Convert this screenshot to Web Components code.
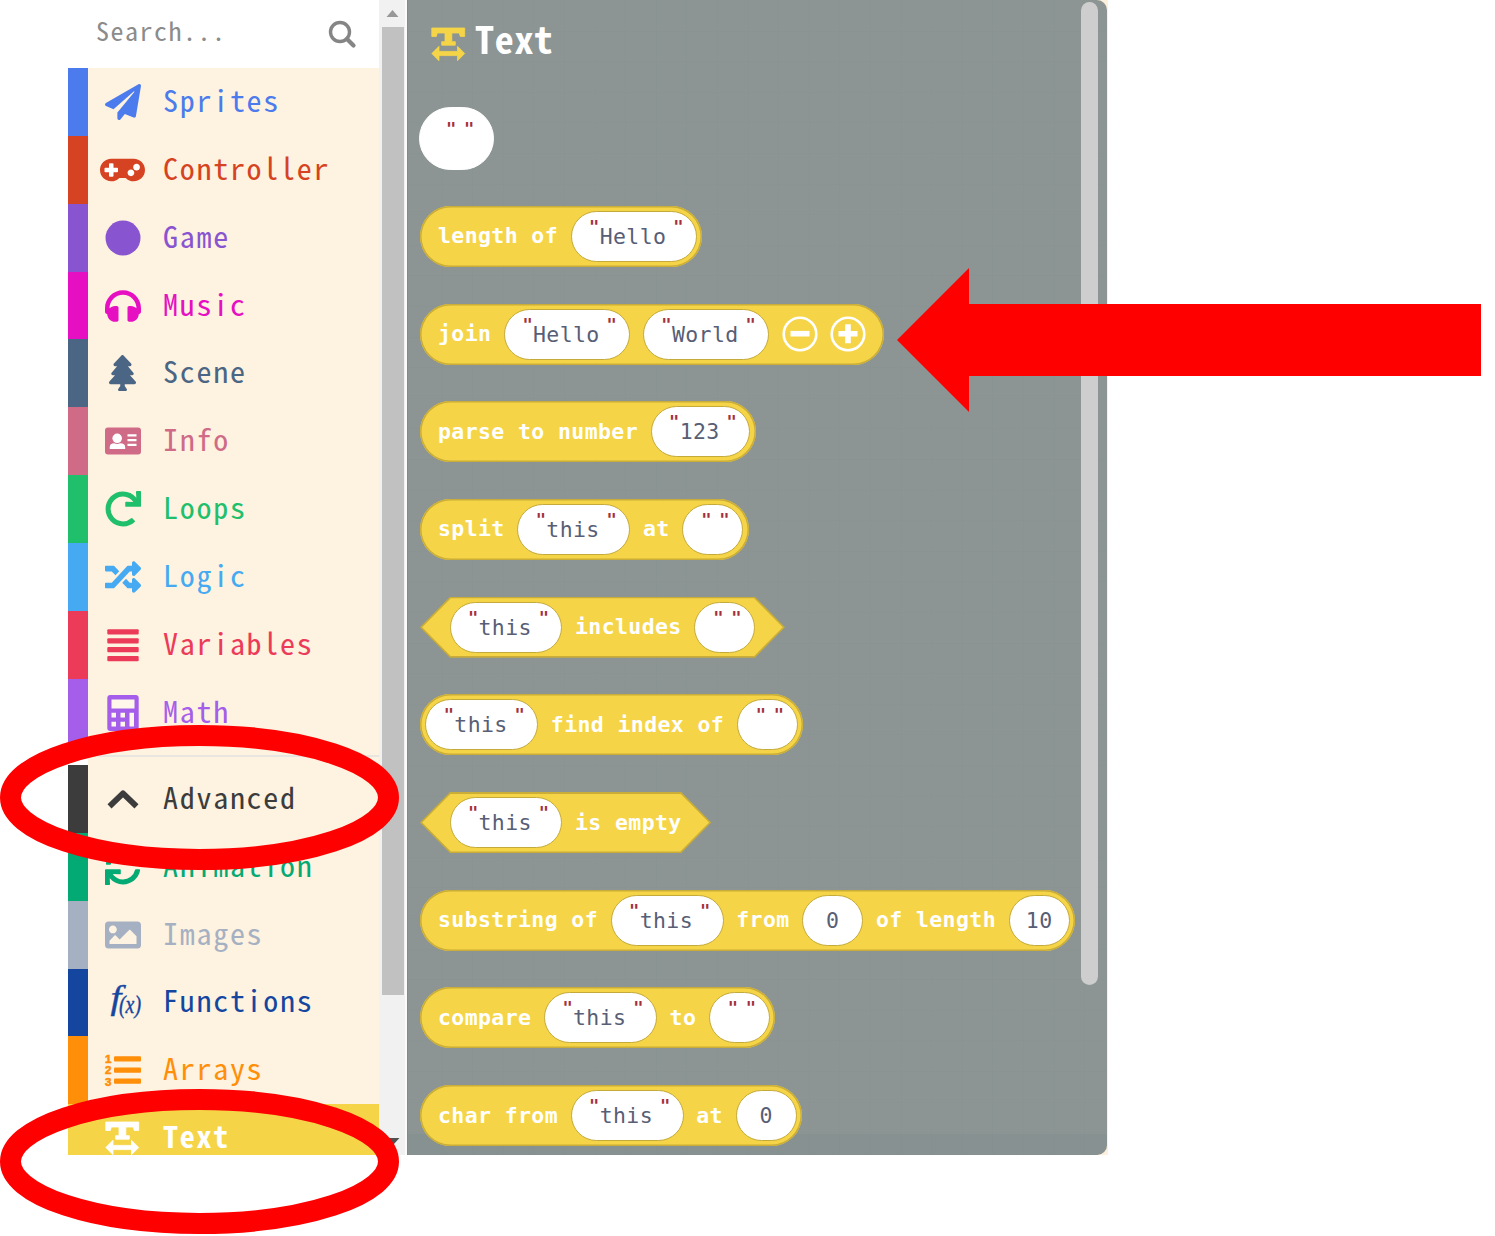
<!DOCTYPE html>
<html lang="en">
<head>
<meta charset="utf-8">
<title>Text blocks toolbox</title>
<style>
html,body{margin:0;background:#fff;overflow:hidden}
</style>
</head>
<body>
<block-editor></block-editor>
<script>
const FA = (w, d) => `<svg width="${w/512*36}" height="36" viewBox="0 0 ${w} 512" fill="currentColor"><path d="${d}"/></svg>`;
const BOX = (s) => `<svg width="36" height="36" viewBox="0 0 36 36" fill="currentColor" overflow="visible">${s}</svg>`;
const TEXT_ICON = BOX('<path stroke="currentColor" stroke-width=".8" stroke-linejoin="round" d="M.8 2H33.700V10.500H29.300L28.300 7H20.800V15.700H24.300V19.200H10.700V15.700H14V7H6.300L5.300 10.500H.8ZM.8 27.500 8 20.300v5.100h18.500v-5.100l7.200 7.200-7.200 7.200v-5.100H8v5.100z"/>');
const ICONS = {
  plane: FA(512,'M476 3.2L12.5 270.6c-18.1 10.4-15.8 35.6 2.2 43.2L121 358.4l287.3-253.2c5.5-4.9 13.3 2.6 8.6 8.3L176 407v80.5c0 23.6 28.5 32.9 42.5 15.8L282 426l124.6 52.2c14.2 6 30.4-2.9 33-18.2l72-432C515 7.8 493.3-6.8 476 3.2z'),
  pad: `<svg width="45" height="36" viewBox="0 0 640 512"><path fill="#fff" d="M60 170h520v180H60z"/><path fill="currentColor" d="M480 96H160C71.6 96 0 167.6 0 256s71.6 160 160 160c44.8 0 85.2-18.4 114.2-48h91.500c29 29.6 69.5 48 114.2 48 88.4 0 160-71.6 160-160S568.4 96 480 96zM256 276c0 6.600-5.400 12-12 12h-52v52c0 6.600-5.400 12-12 12h-40c-6.600 0-12-5.400-12-12v-52H76c-6.600 0-12-5.400-12-12v-40c0-6.600 5.400-12 12-12h52v-52c0-6.600 5.400-12 12-12h40c6.600 0 12 5.400 12 12v52h52c6.600 0 12 5.400 12 12v40zm184 68c-26.500 0-48-21.500-48-48s21.500-48 48-48 48 21.500 48 48-21.500 48-48 48zm80-80c-26.500 0-48-21.500-48-48s21.500-48 48-48 48 21.500 48 48-21.500 48-48 48z"/></svg>`,
  circle: BOX('<circle cx="18" cy="18" r="17.500"/>'),
  phones: FA(512,'M256 32C114.52 32 0 146.497 0 288v48a32 32 0 0 0 17.689 28.622l14.383 7.191C34.083 431.903 83.421 480 144 480h24c13.255 0 24-10.745 24-24V280c0-13.255-10.745-24-24-24h-24c-31.342 0-59.671 12.879-80 33.627V288c0-105.869 86.131-192 192-192s192 86.131 192 192v1.627C427.671 268.879 399.342 256 368 256h-24c-13.255 0-24 10.745-24 24v176c0 13.255 10.745 24 24 24h24c60.579 0 109.917-48.098 111.928-108.187l14.382-7.191A32 32 0 0 0 512 336v-48c0-141.479-114.496-256-256-256z'),
  tree: FA(384,'M378.31 378.49L298.42 288h30.63c9.01 0 16.98-5 20.78-13.06 3.8-8.04 2.55-17.26-3.28-24.05L268.42 160h28.89c9.1 0 17.3-5.35 20.86-13.61 3.52-8.13 1.86-17.59-4.24-24.08L203.66 4.83c-6.03-6.45-17.28-6.45-23.32 0L70.06 122.31c-6.1 6.49-7.75 15.95-4.24 24.08C69.38 154.65 77.59 160 86.69 160h28.89l-78.14 90.91c-5.81 6.78-7.06 15.99-3.27 24.04C37.97 283 45.93 288 54.95 288h30.63L5.69 378.49c-6 6.79-7.36 16.09-3.56 24.26 3.75 8.05 12 13.25 21.01 13.25H160v24.45l-30.29 48.4c-5.32 10.64 2.42 23.16 14.31 23.16h95.96c11.89 0 19.63-12.520 14.31-23.160L224 440.450V416h136.860c9.010 0 17.260-5.200 21.010-13.250 3.800-8.170 2.440-17.470-3.560-24.260z'),
  card: BOX('<rect y="4.500" width="36" height="27" rx="3"/><g fill="#fff"><circle cx="12.200" cy="15.300" r="4.800"/><path d="M4.700 26v-1.500q0-4.200 4.500-4.200 3 1.300 6 0 5 0 5 4.200V26z"/><path d="M22.500 11.200h9v2.200h-9zM22.500 16h9v2.200h-9zM22.500 20.700h9v2.200h-9z"/></g>'),
  redo: FA(512,'M500.33 0h-47.41a12 12 0 0 0-12 12.57l4 82.76A247.42 247.42 0 0 0 256 8C119.34 8 7.9 119.53 8 256.19 8.1 393.07 119.1 504 256 504a247.1 247.1 0 0 0 166.18-63.91 12 12 0 0 0 .48-17.43l-34-34a12 12 0 0 0-16.38-.55A176 176 0 1 1 402.1 157.8l-101.53-4.87a12 12 0 0 0-12.57 12v47.41a12 12 0 0 0 12 12h200.33a12 12 0 0 0 12-12V12a12 12 0 0 0-12-12z'),
  shuffle: FA(512,'M504.971 359.029c9.373 9.373 9.373 24.569 0 33.941l-80 79.984c-15.01 15.01-40.971 4.49-40.971-16.971V416h-58.785a12.004 12.004 0 0 1-8.773-3.812l-70.556-75.596 53.333-57.143L352 336h32v-39.981c0-21.438 25.943-31.998 40.971-16.971l80 79.981zM12 176h84l52.781 56.551 53.333-57.143-70.556-75.596A11.999 11.999 0 0 0 122.785 96H12c-6.627 0-12 5.373-12 12v56c0 6.627 5.373 12 12 12zm372 0v39.984c0 21.46 25.961 31.98 40.971 16.971l80-79.984c9.373-9.373 9.373-24.569 0-33.941l-80-79.981C409.943 24.021 384 34.582 384 56.019V96h-58.785a12.004 12.004 0 0 0-8.773 3.812L96 336H12c-6.627 0-12 5.373-12 12v56c0 6.627 5.373 12 12 12h110.785c3.326 0 6.503-1.381 8.773-3.812L352 176h32z'),
  lines: BOX('<rect x="2.300" y="2.300" width="31.400" height="5.200" rx="1"/><rect x="2.300" y="11.200" width="31.400" height="5.200" rx="1"/><rect x="2.300" y="20" width="31.400" height="5.200" rx="1"/><rect x="2.300" y="29" width="31.400" height="5.200" rx="1"/>'),
  calc: BOX('<rect x="2.300" y="0" width="31.400" height="36" rx="3"/><g fill="#fff7ea"><path d="M6.500 4.500h23v9h-23zM6.500 17.800h4.500v4.700H6.500zM15.500 17.800H20v4.700h-4.500zM24.500 17.800H29v13.700h-4.500zM6.500 26.700h4.500v4.800H6.500zM15.500 26.700H20v4.800h-4.500z"/></g>'),
  up: BOX('<path d="M4.500 25.300 18 12.300l13.500 13" fill="none" stroke="currentColor" stroke-width="5.800" stroke-linejoin="round"/>'),
  sync: FA(512,'M440.65 12.57l4 82.77A247.16 247.16 0 0 0 255.83 8C134.73 8 33.91 94.92 12.29 209.82A12 12 0 0 0 24.09 224h49.05a12 12 0 0 0 11.67-9.26 175.91 175.91 0 0 1 317-56.94l-101.46-4.86a12 12 0 0 0-12.57 12v47.41a12 12 0 0 0 12 12H500a12 12 0 0 0 12-12V12a12 12 0 0 0-12-12h-47.37a12 12 0 0 0-11.98 12.57zM255.83 432a175.61 175.61 0 0 1-146-77.8l101.8 4.87a12 12 0 0 0 12.57-12v-47.4a12 12 0 0 0-12-12H12a12 12 0 0 0-12 12V500a12 12 0 0 0 12 12h47.35a12 12 0 0 0 12-12.6l-4.15-82.57A247.17 247.17 0 0 0 255.83 504c121.11 0 221.93-86.92 243.55-201.82a12 12 0 0 0-11.8-14.18h-49.05a12 12 0 0 0-11.67 9.26A175.86 175.86 0 0 1 255.83 432z'),
  image: FA(512,'M464 448H48c-26.51 0-48-21.49-48-48V112c0-26.51 21.49-48 48-48h416c26.51 0 48 21.49 48 48v288c0 26.51-21.49 48-48 48zM112 120c-30.928 0-56 25.072-56 56s25.072 56 56 56 56-25.072 56-56-25.072-56-56-56zM64 384h384V272l-87.515-87.515c-4.686-4.686-12.284-4.686-16.971 0L208 320l-55.515-55.515c-4.686-4.686-12.284-4.686-16.971 0L64 336v48z'),
  fx: BOX('<g font-family="Liberation Serif,serif" font-style="italic" stroke="currentColor" stroke-width=".4"><text transform="translate(5.500 25) scale(1.150 1)" font-size="34">f</text><text x="14" y="29" font-size="25" textLength="22" lengthAdjust="spacingAndGlyphs">(x)</text></g>'),
  list: BOX('<g font-family="Liberation Sans,sans-serif" font-weight="700" font-size="11.500" stroke="currentColor" stroke-width=".6"><text x="0" y="11">1</text><text x="0" y="22.300">2</text><text x="0" y="33.500">3</text></g><rect x="9" y="4.300" width="27" height="5.200" rx="1"/><rect x="9" y="15.500" width="27" height="5.200" rx="1"/><rect x="9" y="26.600" width="27" height="5.200" rx="1"/>'),
  text: TEXT_ICON
};
const NARROW = '"Noto Sans Mono CJK SC","DejaVu Sans Mono",monospace';
function define(name, html, setup) {
  customElements.define(name, class extends HTMLElement {
    connectedCallback() {
      if (this.shadowRoot) return;
      this.attachShadow({mode: 'open'}).innerHTML = html;
      if (setup) setup(this, this.shadowRoot);
    }
  });
}

define('category-row', `<style>
:host{display:flex;align-items:center;height:67.860px;flex:none;box-sizing:border-box;color:var(--c);background:linear-gradient(90deg,var(--c) 20.500px,#fef2e0 20.500px);font:30px/32px ${NARROW}}
:host([selected]){background:#f5d547;color:#fff;font-weight:700}
i{display:flex;justify-content:center;width:69px;padding-left:20px;flex:none;font-style:normal}
svg{display:block;flex:none}
span{letter-spacing:1.720px;margin:0 0 6px 6px;white-space:pre}
:host([selected]) span{line-height:28px}
</style><i></i><span><slot></slot></span>`, (el, r) => {
  el.style.setProperty('--c', el.getAttribute('color'));
  r.querySelector('i').innerHTML = ICONS[el.getAttribute('icon')];
});

define('search-box', `<style>
:host{display:flex;align-items:center;justify-content:space-between;height:68px;flex:none;box-sizing:border-box;padding:0 22px 2px 28px;color:#8b8b8b;font:26px/36px ${NARROW};background:#fff}
span{letter-spacing:1.500px;margin-bottom:6px}svg{margin-top:4px}
</style><span>Search...</span><svg width="30" height="30" viewBox="0 0 30 30" fill="none" stroke="#858585"><circle cx="13" cy="12" r="9.500" stroke-width="3.400"/><path d="m20 19 6.500 6.500" stroke-width="4.200" stroke-linecap="round"/></svg>`);

define('side-scrollbar', `<style>
:host{display:flex;flex-direction:column;align-items:center;width:26px;flex:none;background:#f1f1f1;border-right:2px solid #fbfbfb;box-sizing:content-box}
svg{display:block;flex:none}b{width:22px;height:968px;background:#c1c1c1;margin-left:2px}
.d{margin-top:142px;margin-left:1px}
</style><svg width="26" height="27" viewBox="0 0 26 27"><path d="m7.500 17 6-7 6 7z" fill="#989898"/></svg><b></b><svg class="d" width="26" height="12" viewBox="0 0 26 12"><path d="M6.500 1h13l-6.500 7z" fill="#505050"/></svg>`);

define('tool-box', `<style>
:host{display:flex;width:339px;height:1155px;overflow:hidden;flex:none}
.l{display:flex;flex-direction:column;width:311px;flex:none;overflow:hidden}
hr{height:18.400px;flex:none;margin:0;border:0;background:linear-gradient(90deg,#fff 20px,transparent 20px),linear-gradient(#fef2e0 8.500px,#e9e6e2 8.500px 10.500px,#fef2e0 10.500px)}
</style><div class="l"><search-box></search-box>
<category-row icon="plane" color="#4b7bec">Sprites</category-row>
<category-row icon="pad" color="#d54322">Controller</category-row>
<category-row icon="circle" color="#8854d0">Game</category-row>
<category-row icon="phones" color="#e60fc2">Music</category-row>
<category-row icon="tree" color="#4b6584">Scene</category-row>
<category-row icon="card" color="#cf6a87">Info</category-row>
<category-row icon="redo" color="#20bf6b">Loops</category-row>
<category-row icon="shuffle" color="#45aaf2">Logic</category-row>
<category-row icon="lines" color="#ec3b59">Variables</category-row>
<category-row icon="calc" color="#a55eea">Math</category-row>
<hr>
<category-row icon="up" color="#3c3c3c">Advanced</category-row>
<category-row icon="sync" color="#03aa74">Animation</category-row>
<category-row icon="image" color="#a5b1c2">Images</category-row>
<category-row icon="fx" color="#1446a0">Functions</category-row>
<category-row icon="list" color="#ff8f08">Arrays</category-row>
<category-row icon="text" color="#f5d547" selected>Text</category-row>
</div><side-scrollbar></side-scrollbar>`);

define('string-field', `<style>
:host{display:flex;flex:none;height:51px;min-width:61px;box-sizing:border-box;border:1.500px solid #c4aa39;border-radius:26px;background:#fff;color:#575e75;font-weight:400}
:host([big]){width:75px;height:63px;border-color:#fff;border-radius:32px;margin-left:-1px}
q{quotes:none;flex:none;color:#a3303c;font:700 17px/20px "DejaVu Sans Mono",monospace;letter-spacing:0;width:9px;padding-top:5px;display:flex;justify-content:center}
.v{line-height:50px;padding-left:1px}
.a{margin-left:18px}
.z{margin:0 13px 0 7.500px}
:host([empty]) .v{width:9px;padding:0}
:host([empty]) .z{margin:0}
:host([empty]) .a{margin-left:18.500px}
:host([big]) .a{margin-left:26.500px}
:host([big]) q{padding-top:11px}
</style><q class="a">"</q><span class="v"><slot></slot></span><q class="z">"</q>`);

define('number-field', `<style>
:host{display:block;flex:none;width:61px;height:51px;line-height:50px;box-sizing:border-box;border:1.500px solid #c4aa39;border-radius:26px;background:#fff;color:#575e75;font-weight:400;text-align:center}
</style><slot></slot>`);

define('round-button', `<style>:host{display:block;flex:none;width:36px;height:36px}svg{display:block}</style><svg width="36" height="36" viewBox="0 0 36 36" fill="none" stroke="#fff"><circle cx="18" cy="18" r="16.300" stroke-width="2.600"/><path stroke-width="5.600"/></svg>`,
(el, r) => r.querySelector('path').setAttribute('d', el.hasAttribute('plus') ? 'M8.500 17.700h19M18 8.200v19' : 'M8.500 17.700h19'));

define('code-block', `<style>
:host{display:flex;position:relative;align-items:center;align-self:flex-start;flex:none;gap:12.700px;height:61px;box-sizing:border-box;padding:0 5.300px 0 18px;border-radius:31px;background:#f5d547;box-shadow:inset 0 0 0 1.500px #c9ad38;color:#fff;font:700 21.500px/50px "DejaVu Sans Mono",monospace;letter-spacing:.39px;white-space:pre}
:host([first]){padding-left:5.300px}
:host([wide]){padding-right:18px}
:host([plain]){height:62px;align-items:flex-start;padding:0;background:none;box-shadow:none}
:host([hex]){padding:0 29.500px;isolation:isolate;border-radius:0;box-shadow:none;background:#c9ad38;clip-path:polygon(30px 0,calc(100% - 30px) 0,100% 50%,calc(100% - 30px) 100%,30px 100%,0 50%)}
:host([hex])::before{content:"";position:absolute;z-index:-1;inset:1.500px 2.200px;background:#f5d547;clip-path:polygon(28.700px 0,calc(100% - 28.700px) 0,100% 50%,calc(100% - 28.700px) 100%,28.700px 100%,0 50%)}
</style><slot></slot>`);

define('block-flyout', `<style>
:host{display:flex;width:701px;height:1155px;flex:none;background:#fdf0dc;overflow:hidden}
.p{display:flex;width:700px;box-sizing:border-box;border-radius:0 10px 10px 0;overflow:hidden;border-left:1px solid #7f8b8a;
background:linear-gradient(transparent 1134px,#7a898a55 1134px),repeating-linear-gradient(90deg,transparent 0 29.600px,#7d8b8a28 29.600px 30.600px) 4px 0,repeating-linear-gradient(transparent 0 29.600px,#7d8b8a28 29.600px 30.600px) 0 1px,#8c9594}
.m{display:flex;flex-direction:column;width:672px;padding-left:12px;box-sizing:border-box;flex:none}
h1{display:flex;align-items:center;margin:0;height:107.300px;box-sizing:border-box;padding:0 0 24px 11px;color:#fff;font:700 38px/60px ${NARROW};letter-spacing:.7px}
h1 i{color:#f5d547;margin:4px 8px 0 0}h1 span{margin-bottom:7px}svg{display:block}
.b{display:flex;flex-direction:column;gap:36.680px}
.s{width:17px;height:983px;margin-top:2px;background:#cecece;border-radius:9px;margin-left:1px}
</style><div class="p"><div class="m"><h1><i>${TEXT_ICON}</i><span>Text</span></h1><div class="b">
<code-block plain><string-field big empty></string-field></code-block>
<code-block><span>length of</span><string-field>Hello</string-field></code-block>
<code-block wide><span>join</span><string-field>Hello</string-field><string-field>World</string-field><round-button></round-button><round-button plus></round-button></code-block>
<code-block><span>parse to number</span><string-field>123</string-field></code-block>
<code-block><span>split</span><string-field>this</string-field><span>at</span><string-field empty></string-field></code-block>
<code-block hex><string-field>this</string-field><span>includes</span><string-field empty></string-field></code-block>
<code-block first><string-field>this</string-field><span>find index of</span><string-field empty></string-field></code-block>
<code-block hex><string-field>this</string-field><span>is empty</span></code-block>
<code-block><span>substring of</span><string-field>this</string-field><span>from</span><number-field>0</number-field><span>of length</span><number-field>10</number-field></code-block>
<code-block><span>compare</span><string-field>this</string-field><span>to</span><string-field empty></string-field></code-block>
<code-block><span>char from</span><string-field>this</string-field><span>at</span><number-field>0</number-field></code-block>
</div></div><div class="s"></div></div>`);

define('red-marks', `<style>:host{position:absolute;inset:0;pointer-events:none}svg{display:block}</style>
<svg width="1495" height="1236" fill="none"><g stroke="#f00" stroke-width="21"><ellipse cx="199.500" cy="797.500" rx="189" ry="62"/><ellipse cx="199.500" cy="1161.500" rx="189" ry="62"/></g><path fill="#f00" d="M897 340l72-72v36h512v72H969v36z"/></svg>`);

define('block-editor', `<style>:host{display:flex;position:relative;width:1495px;height:1236px;box-sizing:border-box;padding-left:68px;align-items:flex-start;overflow:hidden;background:#fff}</style>
<tool-box></tool-box><block-flyout></block-flyout><red-marks></red-marks>`);
</script>
</body>
</html>
